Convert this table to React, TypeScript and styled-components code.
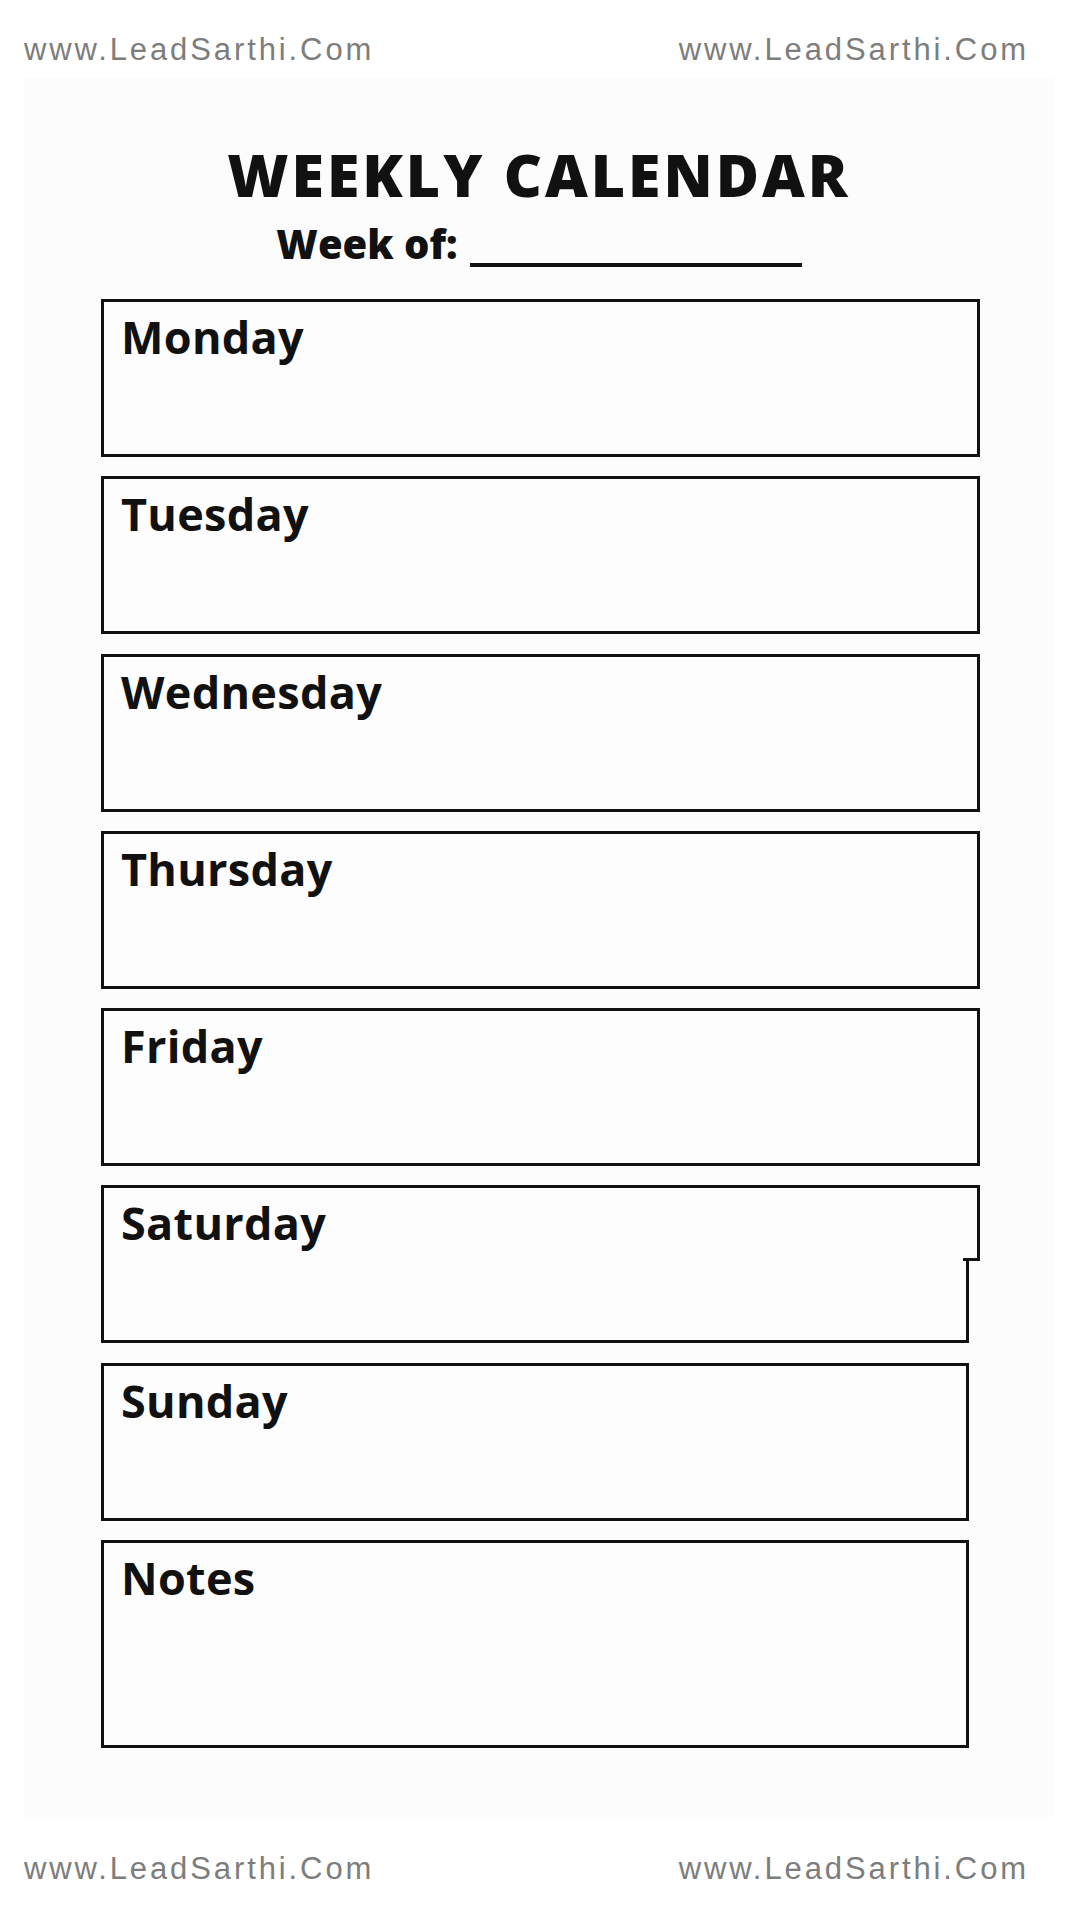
import React from 'react';
import styled, { createGlobalStyle } from 'styled-components';

const GlobalStyle = createGlobalStyle`
    html, body {
        margin: 0;
        padding: 0;
        background: #ffffff;
    }
    * {
        box-sizing: border-box;
    }
`;

const PageFrame = styled.div`
    width: 1080px;
    height: 1920px;
    display: flex;
    flex-direction: column;
    background: #ffffff;
    overflow: hidden;
`;

const MarkRow = styled.div<{ $top: number }>`
    display: flex;
    justify-content: space-between;
    padding: ${(p) => p.$top}px 51px 0 24px;
    span {
        font-family: 'Liberation Sans', Arial, sans-serif;
        font-size: 31px;
        line-height: 1;
        letter-spacing: 2.9px;
        color: #7d7d7d;
        white-space: nowrap;
    }
`;

const Sheet = styled.div`
    margin: 13px 26px 0 24px;
    height: 1739px;
    background: #fcfcfc;
    padding-top: 67px;
    display: flex;
    flex-direction: column;
    font-family: 'Open Sans', 'Liberation Sans', sans-serif;
    color: #111111;
`;

const Title = styled.h1`
    margin: 0;
    text-align: center;
    font-size: 59px;
    line-height: 1;
    font-weight: 800;
    letter-spacing: 3px;
`;

const WeekOf = styled.div`
    margin-top: 20px;
    display: flex;
    justify-content: center;
    align-items: flex-end;
    font-size: 40px;
    line-height: 1;
    font-weight: 800;
`;

const Blank = styled.span`
    display: inline-block;
    width: 332px;
    height: 4px;
    margin-left: 12px;
    margin-bottom: -3px;
    background: #111111;
`;

const DayList = styled.div`
    margin-top: 35px;
    padding-left: 77px;
    display: flex;
    flex-direction: column;
    gap: 19.3px;
`;

const DayBox = styled.div<{ $narrow?: boolean; $tall?: boolean; $notched?: boolean }>`
    position: relative;
    width: ${(p) => (p.$narrow ? 868 : 879)}px;
    height: ${(p) => (p.$tall ? 208 : 158)}px;
    border: 3px solid #111111;
    background: #fdfdfd;
    padding: 12px 0 0 17px;
    h3 {
        margin: 0;
        font-size: 45px;
        line-height: 1;
        font-weight: 700;
        letter-spacing: 0.3px;
    }
    ${(p) =>
        p.$notched &&
        `
        &::after {
            content: '';
            position: absolute;
            top: -3px;
            right: -14px;
            width: 14px;
            height: 70px;
            background: #fdfdfd;
            border-top: 3px solid #111111;
            border-right: 3px solid #111111;
            border-bottom: 3px solid #111111;
        }
    `}
`;

const days = [
    { name: 'Monday' },
    { name: 'Tuesday' },
    { name: 'Wednesday' },
    { name: 'Thursday' },
    { name: 'Friday' },
    { name: 'Saturday', narrow: true, notched: true },
    { name: 'Sunday', narrow: true },
    { name: 'Notes', narrow: true, tall: true },
];

const App = () => {
    return (
        <PageFrame>
            <GlobalStyle />
            <MarkRow $top={34}>
                <span>www.LeadSarthi.Com</span>
                <span>www.LeadSarthi.Com</span>
            </MarkRow>
            <Sheet>
                <Title>WEEKLY CALENDAR</Title>
                <WeekOf>
                    Week of:
                    <Blank />
                </WeekOf>
                <DayList>
                    {days.map((d) => (
                        <DayBox key={d.name} $narrow={d.narrow} $tall={d.tall} $notched={d.notched}>
                            <h3>{d.name}</h3>
                        </DayBox>
                    ))}
                </DayList>
            </Sheet>
            <MarkRow $top={36}>
                <span>www.LeadSarthi.Com</span>
                <span>www.LeadSarthi.Com</span>
            </MarkRow>
        </PageFrame>
    );
};

export default App;
